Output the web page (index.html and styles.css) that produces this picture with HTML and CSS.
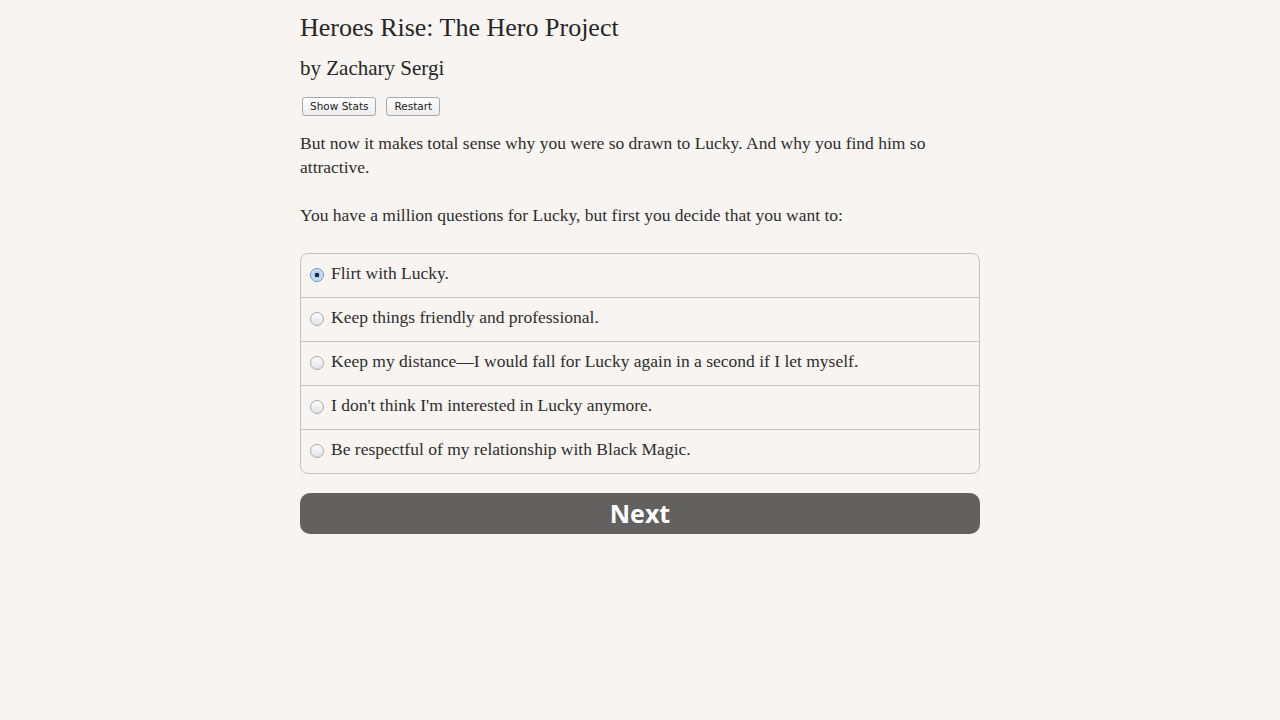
FILE: index.html
```html
<!DOCTYPE html>
<html>
<head>
<meta charset="utf-8">
<link rel="stylesheet" href="styles.css">
</head>
<body>
<div class="page">
  <h1 class="title">Heroes Rise: The Hero Project</h1>
  <h2 class="author">by Zachary Sergi</h2>
  <div class="buttons">
    <button class="small-btn">Show Stats</button>
    <button class="small-btn">Restart</button>
  </div>
  <p class="text">But now it makes total sense why you were so drawn to Lucky. And why you find him so attractive.</p>
  <p class="text">You have a million questions for Lucky, but first you decide that you want to:</p>
  <div class="choices">
    <label class="choice"><span class="radio checked"></span>Flirt with Lucky.</label>
    <label class="choice"><span class="radio"></span>Keep things friendly and professional.</label>
    <label class="choice"><span class="radio"></span>Keep my distance—I would fall for Lucky again in a second if I let myself.</label>
    <label class="choice"><span class="radio"></span>I don't think I'm interested in Lucky anymore.</label>
    <label class="choice"><span class="radio"></span>Be respectful of my relationship with Black Magic.</label>
  </div>
  <button class="next">Next</button>
</div>
</body>
</html>
```
FILE: styles.css
```css
html, body {
  margin: 0;
  padding: 0;
  background: #f7f4f1;
}
body {
  font-family: "Liberation Serif", serif;
  color: #2e2e2e;
}
.page {
  width: 680px;
  margin: 0 auto;
  padding-top: 12px;
}
.title {
  font-size: 26px;
  font-weight: normal;
  margin: 0;
  line-height: 32px;
  color: #262626;
}
.author {
  font-size: 21px;
  font-weight: normal;
  margin: 10px 0 0 0;
  line-height: 28px;
  color: #262626;
}
.buttons {
  display: flex;
  gap: 10px;
  margin-top: 15px;
  padding-left: 2px;
}
.small-btn {
  font-family: "DejaVu Sans", sans-serif;
  font-size: 10.5px;
  height: 19px;
  padding: 0 7px;
  border: 1px solid #a9a9a9;
  border-radius: 3px;
  background: linear-gradient(#ffffff, #ececec);
  color: #1e1e1e;
  line-height: 17px;
}
.text {
  font-size: 17.5px;
  line-height: 24px;
  margin: 15px 0 0 0;
  color: #2e2e2e;
}
.text + .text {
  margin-top: 24px;
}
.choices {
  margin-top: 26px;
  border: 1px solid #c2c2c2;
  border-radius: 8px;
  overflow: hidden;
}
.choice {
  display: flex;
  align-items: center;
  height: 43px;
  box-sizing: border-box;
  padding: 0 0 4px 9px;
  font-size: 17.5px;
  border-top: 1px solid #c2c2c2;
  color: #2e2e2e;
}
.choice:first-child {
  border-top: none;
  height: 43px;
}
.choice + .choice {
  height: 44px;
}
.radio {
  width: 14px;
  height: 14px;
  border-radius: 50%;
  border: 1px solid #a8a8a8;
  background: linear-gradient(#fdfdfd, #e4e4e4);
  margin: 3px 7px 0 0;
  box-sizing: border-box;
  flex-shrink: 0;
}
.radio.checked {
  border-color: #6f8fb8;
  background: radial-gradient(circle, #1d2b3a 0 2px, #a9c7ec 2.5px, #d7e6f7 6px);
}
.next {
  display: block;
  width: 680px;
  height: 41px;
  margin-top: 19px;
  border: none;
  border-radius: 10px;
  background: #626160;
  color: #ffffff;
  font-family: "Open Sans", sans-serif;
  font-weight: 700;
  font-size: 25px;
  line-height: 41px;
  padding: 0;
}
```
